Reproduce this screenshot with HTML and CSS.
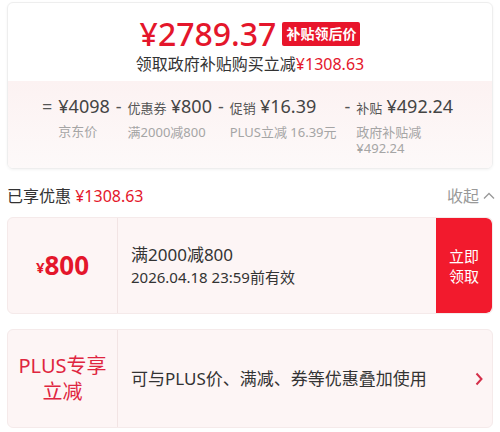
FILE: index.html
```html
<!DOCTYPE html>
<html lang="zh-CN">
<head>
  <meta charset="UTF-8">
  <meta name="viewport" content="width=device-width, initial-scale=1.0">
  <title>优惠明细</title>
  <link rel="stylesheet" href="styles.css">
</head>
<body>
  <div class="page">
    <div class="price-card">
      <div class="price-top">
        <div class="final-line">
          <span class="final-price">¥2789.37</span>
          <span class="badge">补贴领后价</span>
        </div>
        <div class="save-line">领取政府补贴购买立减<span class="red">¥1308.63</span></div>
      </div>

      <div class="breakdown">
        <span class="op op-first">=</span>
        <div class="part">
          <div class="part-top"><span class="part-value">¥4098</span></div>
          <div class="part-desc">京东价</div>
        </div>
        <span class="op">-</span>
        <div class="part">
          <div class="part-top"><span class="part-name">优惠券</span> <span class="part-value">¥800</span></div>
          <div class="part-desc">满2000减800</div>
        </div>
        <span class="op">-</span>
        <div class="part">
          <div class="part-top"><span class="part-name">促销</span> <span class="part-value">¥16.39</span></div>
          <div class="part-desc">PLUS立减 16.39元</div>
        </div>
        <span class="op op-wide">-</span>
        <div class="part part-last">
          <div class="part-top"><span class="part-name">补贴</span> <span class="part-value">¥492.24</span></div>
          <div class="part-desc">政府补贴减 ¥492.24</div>
        </div>
      </div>
    </div>

    <div class="summary">
      <div>已享优惠 <span class="red">¥1308.63</span></div>
      <div class="fold">收起
        <svg width="14" height="14" viewBox="0 0 14 14"><path d="M2 9.5 L7 4.5 L12 9.5" fill="none" stroke="#999" stroke-width="1.3"/></svg>
      </div>
    </div>

    <div class="coupon">
      <div class="coupon-left">
        <span class="yen">¥</span><span class="amount">800</span>
      </div>
      <div class="coupon-info">
        <div class="coupon-title">满2000减800</div>
        <div class="coupon-date">2026.04.18 23:59前有效</div>
      </div>
      <button class="coupon-btn">立即<br>领取</button>
    </div>

    <div class="coupon plus">
      <div class="coupon-left plus-label">PLUS专享<br>立减</div>
      <div class="coupon-info plus-text">可与PLUS价、满减、券等优惠叠加使用</div>
      <div class="arrow">
        <svg width="10" height="16" viewBox="0 0 10 16"><path d="M2.5 2.5 L7.5 8 L2.5 13.5" fill="none" stroke="#d4304a" stroke-width="2"/></svg>
      </div>
    </div>
  </div>
</body>
</html>
```

FILE: styles.css
```css
body {
  margin: 0;
  background: #fff;
  font-family: "Noto Sans", "Noto Sans CJK SC", sans-serif;
  line-height: 1.4;
  color: #333;
}

.page {
  padding: 2px 7px 0;
}

.red {
  color: #e4162b;
}

.price-card {
  border: 1px solid #eee;
  border-radius: 6px;
  box-shadow: 0 1px 3px rgba(0,0,0,0.05);
  overflow: hidden;
}

.price-top {
  padding: 12px 0 6px;
  text-align: center;
}

.final-line {
  display: flex;
  justify-content: center;
  align-items: center;
  gap: 6px;
  height: 38px;
  line-height: 38px;
}

.final-price {
  color: #e4162b;
  font-size: 32px;
  font-weight: 500;
}

.badge {
  background: #e8152b;
  color: #fff;
  font-size: 14px;
  font-weight: bold;
  line-height: 24px;
  padding: 0 4px;
  border-radius: 2px;
}

.save-line {
  font-size: 16px;
  line-height: 22px;
}

.breakdown {
  display: flex;
  align-items: flex-start;
  padding: 13px 40px 12px 34px;
  background: linear-gradient(#fcf2f2, #fdf9f9);
}

.op {
  font-size: 18px;
  line-height: 24px;
  color: #555;
  margin: 0 6px;
}

.op-first {
  margin-left: 0;
}

.op-wide {
  margin-left: 8px;
}

.part {
  flex: none;
}

.part-last {
  flex: 0 1 auto;
}

.part-top {
  white-space: nowrap;
  line-height: 24px;
}

.part-name {
  font-size: 13px;
  color: #555;
}

.part-value {
  font-size: 18px;
  color: #444;
}

.part-desc {
  font-size: 13px;
  line-height: 16px;
  color: #a5a5a5;
  margin-top: 4px;
}

.summary {
  display: flex;
  justify-content: space-between;
  align-items: center;
  font-size: 16px;
  line-height: 24px;
  margin: 15px -3px 9px 0;
}

.fold {
  color: #999;
  display: flex;
  align-items: center;
  gap: 3px;
}

.coupon {
  display: flex;
  height: 97px;
  background: #fdf5f5;
  border: 1px solid #f5eaea;
  border-radius: 6px;
  box-sizing: border-box;
  overflow: hidden;
}

.coupon-left {
  width: 109px;
  flex: none;
  display: flex;
  justify-content: center;
  align-items: center;
  border-right: 1px solid #f2e4e4;
  color: #e4162b;
  font-weight: bold;
}

.yen {
  font-size: 15px;
  margin-top: 4px;
}

.amount {
  font-size: 26px;
}

.coupon-info {
  flex: 1;
  display: flex;
  flex-direction: column;
  justify-content: center;
  padding-left: 13px;
}

.coupon-title {
  font-size: 17px;
  line-height: 22px;
}

.coupon-date {
  font-size: 15px;
  line-height: 22px;
}

.coupon-btn {
  width: 56px;
  border: none;
  background: #f21a2d;
  color: #fff;
  font-family: inherit;
  font-size: 15px;
  line-height: 20px;
  padding: 0;
  border-radius: 0 6px 6px 0;
}

.plus {
  height: 99px;
  margin-top: 15px;
}

.plus-label {
  flex-direction: column;
  font-weight: normal;
  font-size: 20px;
  line-height: 26px;
  text-align: center;
  color: #df2540;
}

.plus-text {
  font-size: 17px;
}

.arrow {
  width: 30px;
  display: flex;
  align-items: center;
  justify-content: flex-end;
  padding-right: 8px;
}
```
